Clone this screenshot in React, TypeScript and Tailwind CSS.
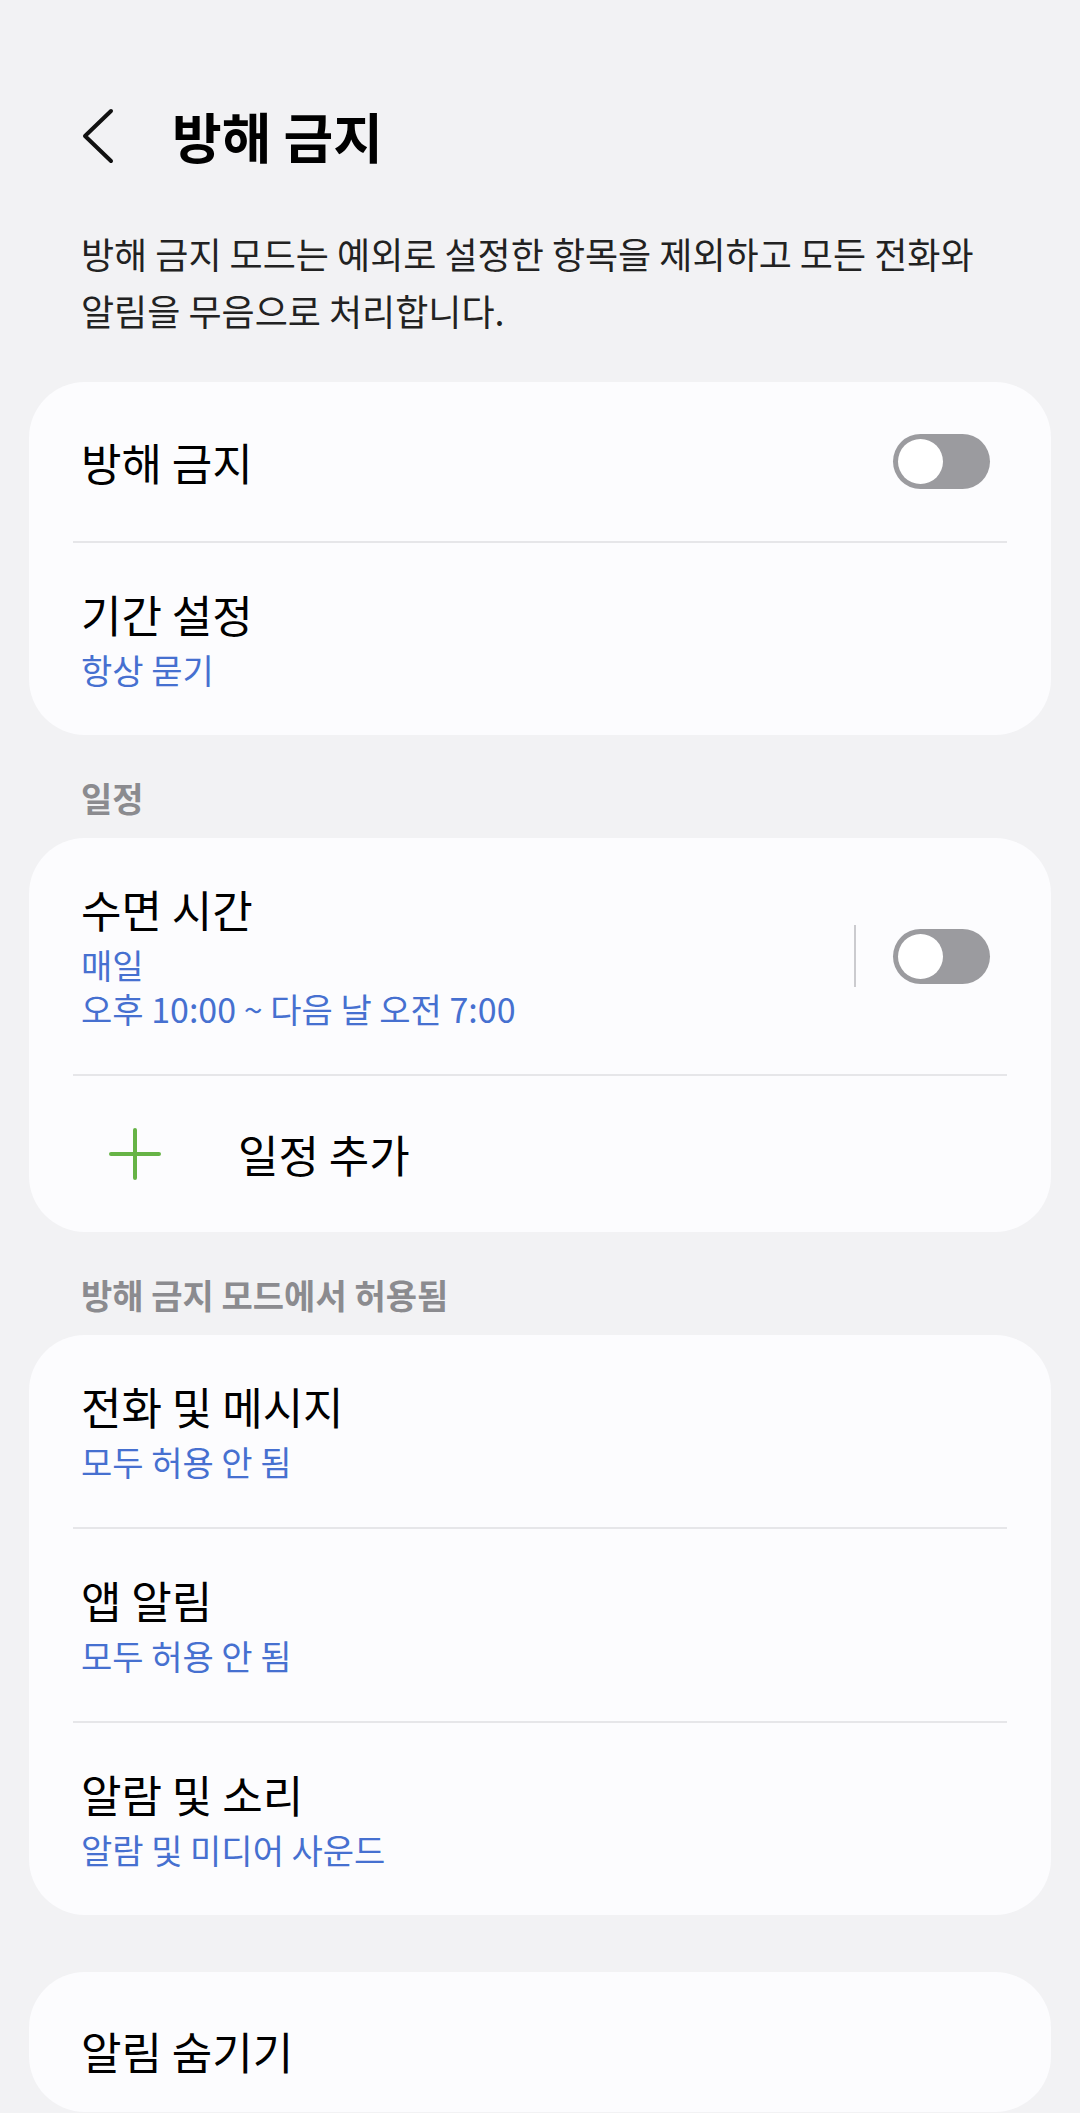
import React from "react";

function Toggle() {
  return (
    <div className="w-[97px] h-[55px] rounded-full bg-[#9b9b9f] p-[5px] shrink-0">
      <div className="w-[45px] h-[45px] rounded-full bg-white" />
    </div>
  );
}

function Divider() {
  return <div className="h-[2px] mx-[44px] bg-[#e6e6e9]" />;
}

function SectionHeader({ label }: { label: string }) {
  return (
    <div className="mt-[43px] mb-[20px] pl-[81px] text-[34px] leading-[40px] font-semibold text-[#8b8b8f]">
      {label}
    </div>
  );
}

function Row({ title, subs }: { title: string; subs: string[] }) {
  return (
    <div className="pt-[46px] pb-[43px] pl-[52px] pr-[52px]">
      <div className="text-[44px] leading-[50px] text-black">{title}</div>
      <p className="mt-[9px] text-[34px] leading-[44px] text-[#4670d0]">
        {subs.map((s, i) => (
          <React.Fragment key={s}>
            {i > 0 && <br />}
            {s}
          </React.Fragment>
        ))}
      </p>
    </div>
  );
}

export default function App() {
  return (
    <div className="w-[1080px] min-h-[2113px] bg-[#f2f2f4] font-[family-name:'Noto_Sans_CJK_KR',sans-serif] overflow-hidden">
      {/* header */}
      <div className="pt-[100px] pl-[82px] h-[172px] flex items-center">
        <svg width="34" height="56" viewBox="0 0 34 56" fill="none">
          <path d="M29 3 L3 28 L29 53" stroke="#111" strokeWidth="4" strokeLinecap="round" strokeLinejoin="round" />
        </svg>
        <h1 className="ml-[56px] text-[54px] leading-[72px] font-bold text-black">방해 금지</h1>
      </div>

      <p className="mt-[53px] pl-[81px] pr-[30px] text-[36px] leading-[57px] text-[#222]">
        방해 금지 모드는 예외로 설정한 항목을 제외하고 모든 전화와
        <br />
        알림을 무음으로 처리합니다.
      </p>

      {/* card 1 */}
      <div className="mt-[43px] mx-[29px] rounded-[56px] bg-[#fcfcfe]">
        <div className="h-[159px] flex items-center justify-between pl-[52px] pr-[61px]">
          <span className="text-[44px] leading-[50px] text-black">방해 금지</span>
          <Toggle />
        </div>
        <Divider />
        <Row title="기간 설정" subs={["항상 묻기"]} />
      </div>

      <SectionHeader label="일정" />

      {/* card 2 */}
      <div className="mx-[29px] rounded-[56px] bg-[#fcfcfe]">
        <div className="flex items-center pr-[61px]">
          <div className="flex-1">
            <Row title="수면 시간" subs={["매일", "오후 10:00 ~ 다음 날 오전 7:00"]} />
          </div>
          <div className="w-[2px] h-[62px] bg-[#cbcbcf] mr-[37px]" />
          <Toggle />
        </div>
        <Divider />
        <div className="h-[156px] flex items-center pl-[80px]">
          <svg width="52" height="52" viewBox="0 0 52 52" fill="none">
            <path d="M26 2 V50 M2 26 H50" stroke="#66b346" strokeWidth="4" strokeLinecap="round" />
          </svg>
          <span className="ml-[77px] text-[44px] leading-[50px] text-black">일정 추가</span>
        </div>
      </div>

      <SectionHeader label="방해 금지 모드에서 허용됨" />

      {/* card 3 */}
      <div className="mx-[29px] rounded-[56px] bg-[#fcfcfe]">
        <Row title="전화 및 메시지" subs={["모두 허용 안 됨"]} />
        <Divider />
        <Row title="앱 알림" subs={["모두 허용 안 됨"]} />
        <Divider />
        <Row title="알람 및 소리" subs={["알람 및 미디어 사운드"]} />
      </div>

      {/* card 4 */}
      <div className="mt-[57px] mx-[29px] rounded-[56px] bg-[#fcfcfe] pt-[54px] pb-[36px] pl-[52px]">
        <div className="text-[44px] leading-[50px] text-black">알림 숨기기</div>
      </div>
    </div>
  );
}
